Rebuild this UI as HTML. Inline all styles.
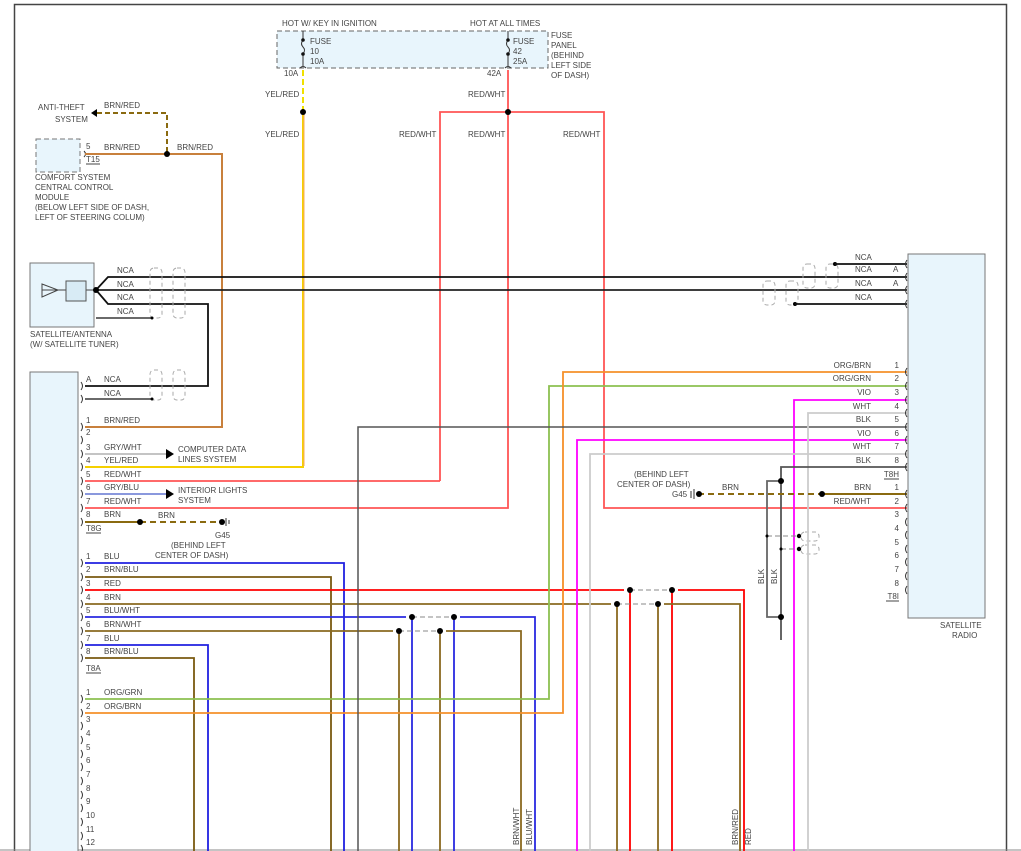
<!DOCTYPE html>
<html><head><meta charset="utf-8"><style>
html,body{margin:0;padding:0;background:#fff;}
svg{display:block;}
text{font-family:"Liberation Sans",sans-serif;font-size:8px;fill:#444;}
</style></head><body>
<svg width="1021" height="851" viewBox="0 0 1021 851" xmlns="http://www.w3.org/2000/svg">
<rect x="0" y="0" width="1021" height="851" fill="#fff"/>
<!-- frame -->
<path d="M14.5 851 V4.5 H1006.5 V851" fill="none" stroke="#444" stroke-width="1.5"/>
<line x1="0" y1="850" x2="1021" y2="850" stroke="#888" stroke-width="1"/>

<!-- fuse box -->
<rect x="277" y="31" width="271" height="37" fill="#e8f5fc" stroke="#666" stroke-dasharray="5,3"/>
<text x="282" y="26">HOT W/ KEY IN IGNITION</text>
<text x="470" y="26">HOT AT ALL TIMES</text>
<text x="310" y="44">FUSE</text><text x="310" y="54">10</text><text x="310" y="64">10A</text>
<text x="513" y="44">FUSE</text><text x="513" y="54">42</text><text x="513" y="64">25A</text>
<text x="551" y="38">FUSE</text><text x="551" y="48">PANEL</text><text x="551" y="58">(BEHIND</text><text x="551" y="68">LEFT SIDE</text><text x="551" y="78">OF DASH)</text>
<text x="284" y="76">10A</text><text x="487" y="76">42A</text>
<g stroke="#333" fill="none" stroke-width="1">
<path d="M303 31 V40 M303 40 q-3 4 0 7 q3 3 0 7 M303 54 V66 M300 68 q3 -3 6 0"/>
<path d="M508 31 V40 M508 40 q-3 4 0 7 q3 3 0 7 M508 54 V66 M505 68 q3 -3 6 0"/>
</g>
<circle cx="303" cy="40" r="1.8" fill="#111"/><circle cx="303" cy="54" r="1.8" fill="#111"/>
<circle cx="508" cy="40" r="1.8" fill="#111"/><circle cx="508" cy="54" r="1.8" fill="#111"/>

<!-- YEL/RED -->
<line x1="303" y1="70" x2="303" y2="112" stroke="#f0e000" stroke-width="2" stroke-dasharray="6,3"/>
<path d="M303 112 V467 H85" fill="none" stroke="#f5d000" stroke-width="2"/>
<path d="M304 114 V466" fill="none" stroke="#f7a860" stroke-width="1"/>
<circle cx="303" cy="112" r="3" fill="#000"/>
<text x="265" y="97">YEL/RED</text><text x="265" y="137">YEL/RED</text>

<!-- RED/WHT -->
<g fill="none" stroke="#f55" stroke-width="1.8">
<path d="M508 70 V508 H85"/>
<path d="M440 481 V112 H604 V508 H907"/>
<path d="M440 481 H85"/>
</g>
<circle cx="508" cy="112" r="3" fill="#000"/>
<text x="468" y="97">RED/WHT</text><text x="399" y="137">RED/WHT</text><text x="468" y="137">RED/WHT</text><text x="563" y="137">RED/WHT</text>

<!-- anti theft -->
<text x="38" y="110">ANTI-THEFT</text><text x="55" y="122">SYSTEM</text>
<path d="M91 113 l6 -4 v8 z" fill="#000"/>
<path d="M97 113 H167 V154" fill="none" stroke="#8a6a10" stroke-width="2" stroke-dasharray="5,3"/>
<text x="104" y="108">BRN/RED</text>
<rect x="36" y="139" width="44" height="33" fill="#e8f5fc" stroke="#777" stroke-dasharray="5,3"/>
<text x="86" y="149">5</text><text x="86" y="162">T15</text><line x1="86" y1="164" x2="100" y2="164" stroke="#444"/>
<path d="M84 151 q3 3 0 6" fill="none" stroke="#333"/>
<path d="M85 154 H222 V427 H85" fill="none" stroke="#c8803c" stroke-width="2"/>
<circle cx="167" cy="154" r="3" fill="#000"/>
<text x="104" y="150">BRN/RED</text><text x="177" y="150">BRN/RED</text>
<text x="35" y="180">COMFORT SYSTEM</text><text x="35" y="190">CENTRAL CONTROL</text><text x="35" y="200">MODULE</text><text x="35" y="210">(BELOW LEFT SIDE OF DASH,</text><text x="35" y="220">LEFT OF STEERING COLUM)</text>

<!-- antenna -->
<rect x="30" y="263" width="64" height="64" fill="#e8f5fc" stroke="#777"/>
<path d="M42 284 L58 290 L42 297 Z M42 290 H66 M86 290 H96" fill="none" stroke="#444"/>
<rect x="66" y="281" width="20" height="20" fill="#d8ebf5" stroke="#555"/>
<text x="30" y="337">SATELLITE/ANTENNA</text><text x="30" y="347">(W/ SATELLITE TUNER)</text>
<g fill="none" stroke="#111" stroke-width="1.8">
<path d="M96 290 L108 277 H907"/>
<path d="M96 290 H907" stroke="#222"/>
<path d="M96 290 L108 304 H208 V386 H85"/>
</g>
<path d="M96 318 H152" stroke="#111" stroke-width="1.3"/>
<path d="M85 399 H152" stroke="#111" stroke-width="1.3"/>
<circle cx="96" cy="290" r="3" fill="#000"/>
<text x="117" y="273">NCA</text><text x="117" y="287">NCA</text><text x="117" y="300">NCA</text><text x="117" y="314">NCA</text>
<g fill="none" stroke="#aaa" stroke-dasharray="4,3">
<rect x="150" y="268" width="12" height="50" rx="4"/><rect x="173" y="268" width="12" height="50" rx="4"/>
<rect x="150" y="370" width="12" height="30" rx="4"/><rect x="173" y="370" width="12" height="30" rx="4"/>
<rect x="803" y="264" width="12" height="24" rx="4"/><rect x="826" y="264" width="12" height="24" rx="4"/>
<rect x="763" y="281" width="12" height="24" rx="4"/><rect x="786" y="281" width="12" height="24" rx="4"/>
<rect x="801" y="532" width="18" height="9" rx="4"/><rect x="801" y="545" width="18" height="9" rx="4"/>
</g>

<!-- left lower connector -->
<rect x="30" y="372" width="48" height="490" fill="#e8f5fc" stroke="#777"/>
<text x="86" y="382">A</text><text x="104" y="382">NCA</text><text x="104" y="396">NCA</text>
<text x="86" y="423">1</text><text x="104" y="423">BRN/RED</text>
<text x="86" y="435">2</text>
<text x="86" y="450">3</text><text x="104" y="450">GRY/WHT</text>
<text x="86" y="463">4</text><text x="104" y="463">YEL/RED</text>
<text x="86" y="477">5</text><text x="104" y="477">RED/WHT</text>
<text x="86" y="490">6</text><text x="104" y="490">GRY/BLU</text>
<text x="86" y="504">7</text><text x="104" y="504">RED/WHT</text>
<text x="86" y="517">8</text><text x="104" y="517">BRN</text>
<text x="86" y="531">T8G</text><line x1="86" y1="533" x2="101" y2="533" stroke="#444"/>
<path d="M85 454 H166" stroke="#bbb" stroke-width="1.8"/>
<path d="M166 449 l8 5 l-8 5 z" fill="#000"/>
<text x="178" y="452">COMPUTER DATA</text><text x="178" y="462">LINES SYSTEM</text>
<path d="M85 494 H166" stroke="#7a8ad8" stroke-width="1.8"/>
<path d="M166 489 l8 5 l-8 5 z" fill="#000"/>
<text x="178" y="493">INTERIOR LIGHTS</text><text x="178" y="503">SYSTEM</text>
<path d="M85 522 H140" stroke="#8a6a10" stroke-width="2"/>
<path d="M140 522 H220" stroke="#8a6a10" stroke-width="2" stroke-dasharray="6,4"/>
<circle cx="140" cy="522" r="3" fill="#000"/><circle cx="222" cy="522" r="3" fill="#000"/>
<path d="M226 518 v8 M229 520 v4" stroke="#333"/>
<text x="158" y="518">BRN</text>
<text x="215" y="538">G45</text><text x="171" y="548">(BEHIND LEFT</text><text x="155" y="558">CENTER OF DASH)</text>

<!-- T8A -->
<text x="86" y="559">1</text><text x="104" y="559">BLU</text>
<text x="86" y="572">2</text><text x="104" y="572">BRN/BLU</text>
<text x="86" y="586">3</text><text x="104" y="586">RED</text>
<text x="86" y="600">4</text><text x="104" y="600">BRN</text>
<text x="86" y="613">5</text><text x="104" y="613">BLU/WHT</text>
<text x="86" y="627">6</text><text x="104" y="627">BRN/WHT</text>
<text x="86" y="641">7</text><text x="104" y="641">BLU</text>
<text x="86" y="654">8</text><text x="104" y="654">BRN/BLU</text>
<text x="86" y="671">T8A</text><line x1="86" y1="673" x2="101" y2="673" stroke="#444"/>
<text x="86" y="695">1</text><text x="104" y="695">ORG/GRN</text>
<text x="86" y="709">2</text><text x="104" y="709">ORG/BRN</text>
<text x="86" y="722">3</text><text x="86" y="736">4</text><text x="86" y="750">5</text><text x="86" y="763">6</text><text x="86" y="777">7</text><text x="86" y="791">8</text><text x="86" y="804">9</text><text x="86" y="818">10</text><text x="86" y="832">11</text><text x="86" y="845">12</text>

<g fill="none" stroke-width="1.8">
<path d="M85 563 H344 V851" stroke="#2020e0"/>
<path d="M85 577 H331 V851" stroke="#7a5a10"/>
<path d="M85 590 H624 M678 590 H744 V851 M630 590 V851 M672 590 V851" stroke="#f00"/>
<path d="M85 604 H611 M664 604 H740 V851 M617 604 V851 M658 604 V851" stroke="#8a6a20"/>
<path d="M85 617 H406 M460 617 H535 V851 M412 617 V851 M454 617 V851" stroke="#2a2ae0"/>
<path d="M85 631 H393 M446 631 H521 V851 M399 631 V851 M440 631 V851" stroke="#8a6a20"/>
<path d="M85 645 H208 V851" stroke="#2020e0"/>
<path d="M85 658 H194 V851" stroke="#7a5a10"/>
<path d="M85 699 H549 V386 H907" stroke="#8cc050"/>
<path d="M85 713 H563 V372 H907" stroke="#f5902a"/>
<path d="M358 851 V427 H907" stroke="#555" stroke-width="1.5"/>
<path d="M577 851 V440 H907 M794 851 V400 H907" stroke="#f0f"/>
<path d="M590 851 V454 H907 M808 851 V413 H907" stroke="#ccc"/>
<path d="M781 640 V467 H907" stroke="#555"/>
<path d="M781 481 H767 V617 H781" stroke="#666"/>
</g>
<g stroke="#888" stroke-dasharray="5,3">
<path d="M630 590 H672 M617 604 H658 M412 617 H454 M399 631 H440 M767 536 H799 M781 549 H799"/>
</g>
<g fill="#000">
<circle cx="630" cy="590" r="3"/><circle cx="672" cy="590" r="3"/>
<circle cx="617" cy="604" r="3"/><circle cx="658" cy="604" r="3"/>
<circle cx="412" cy="617" r="3"/><circle cx="454" cy="617" r="3"/>
<circle cx="399" cy="631" r="3"/><circle cx="440" cy="631" r="3"/>
<circle cx="781" cy="481" r="3"/><circle cx="781" cy="617" r="3"/>
<circle cx="767" cy="536" r="1.5"/><circle cx="781" cy="549" r="1.5"/>
<circle cx="799" cy="536" r="2.2"/><circle cx="799" cy="549" r="2.2"/>
<circle cx="835" cy="264" r="2"/><circle cx="795" cy="304" r="2"/>
<circle cx="152" cy="318" r="1.5"/><circle cx="152" cy="399" r="1.5"/>
</g>
<text transform="translate(764,584) rotate(-90)">BLK</text>
<text transform="translate(777,584) rotate(-90)">BLK</text>
<text transform="translate(519,845) rotate(-90)">BRN/WHT</text>
<text transform="translate(532,845) rotate(-90)">BLU/WHT</text>
<text transform="translate(738,845) rotate(-90)">BRN/RED</text>
<text transform="translate(751,845) rotate(-90)">RED</text>

<!-- right NCA -->
<path d="M835 264 H907 M795 304 H907" stroke="#111" stroke-width="1.8"/>
<text x="855" y="260">NCA</text><text x="855" y="272">NCA</text><text x="855" y="286">NCA</text><text x="855" y="300">NCA</text>
<text x="893" y="272">A</text><text x="893" y="286">A</text>

<!-- G45 right -->
<text x="634" y="477">(BEHIND LEFT</text><text x="617" y="487">CENTER OF DASH)</text>
<text x="672" y="497">G45</text>
<path d="M691 491 v7 M694 489 v10" stroke="#333"/>
<path d="M698 494 H822" stroke="#8a6a10" stroke-width="2" stroke-dasharray="6,4"/>
<path d="M822 494 H907" stroke="#8a6a10" stroke-width="2"/>
<circle cx="699" cy="494" r="3" fill="#000"/><circle cx="822" cy="494" r="3" fill="#000"/>
<text x="722" y="490">BRN</text>

<!-- right radio -->
<rect x="908" y="254" width="77" height="364" fill="#e8f5fc" stroke="#777"/>
<text x="940" y="628">SATELLITE</text><text x="952" y="638">RADIO</text>
<g text-anchor="end">
<text x="871" y="368">ORG/BRN</text><text x="871" y="381">ORG/GRN</text><text x="871" y="395">VIO</text><text x="871" y="409">WHT</text><text x="871" y="422">BLK</text><text x="871" y="436">VIO</text><text x="871" y="449">WHT</text><text x="871" y="463">BLK</text>
<text x="871" y="490">BRN</text><text x="871" y="504">RED/WHT</text>
<text x="899" y="368">1</text><text x="899" y="381">2</text><text x="899" y="395">3</text><text x="899" y="409">4</text><text x="899" y="422">5</text><text x="899" y="436">6</text><text x="899" y="449">7</text><text x="899" y="463">8</text>
<text x="899" y="477">T8H</text>
<text x="899" y="490">1</text><text x="899" y="504">2</text><text x="899" y="517">3</text><text x="899" y="531">4</text><text x="899" y="545">5</text><text x="899" y="558">6</text><text x="899" y="572">7</text><text x="899" y="586">8</text>
<text x="899" y="599">T8I</text>
</g>
<path d="M884 479 H899 M886 601 H899" stroke="#444"/>
<g fill="none" stroke="#333">
<path d="M907 260 q-3 4 0 8 M907 273 q-3 4 0 8 M907 286 q-3 4 0 8 M907 300 q-3 4 0 8"/>
<path d="M907 368 q-3 4 0 8 M907 382 q-3 4 0 8 M907 396 q-3 4 0 8 M907 409 q-3 4 0 8 M907 423 q-3 4 0 8 M907 436 q-3 4 0 8 M907 450 q-3 4 0 8 M907 463 q-3 4 0 8"/>
<path d="M907 490 q-3 4 0 8 M907 504 q-3 4 0 8 M907 518 q-3 4 0 8 M907 531 q-3 4 0 8 M907 545 q-3 4 0 8 M907 558 q-3 4 0 8 M907 572 q-3 4 0 8 M907 586 q-3 4 0 8"/>
<path d="M81 382 q3 4 0 8 M81 395 q3 4 0 8 M81 423 q3 4 0 8 M81 436 q3 4 0 8 M81 450 q3 4 0 8 M81 463 q3 4 0 8 M81 477 q3 4 0 8 M81 490 q3 4 0 8 M81 504 q3 4 0 8 M81 518 q3 4 0 8"/>
<path d="M81 559 q3 4 0 8 M81 573 q3 4 0 8 M81 586 q3 4 0 8 M81 600 q3 4 0 8 M81 613 q3 4 0 8 M81 627 q3 4 0 8 M81 641 q3 4 0 8 M81 654 q3 4 0 8"/>
<path d="M81 695 q3 4 0 8 M81 709 q3 4 0 8 M81 722 q3 4 0 8 M81 736 q3 4 0 8 M81 750 q3 4 0 8 M81 763 q3 4 0 8 M81 777 q3 4 0 8 M81 791 q3 4 0 8 M81 804 q3 4 0 8 M81 818 q3 4 0 8 M81 832 q3 4 0 8 M81 845 q3 4 0 8"/>
</g>
</svg>
</body></html>
